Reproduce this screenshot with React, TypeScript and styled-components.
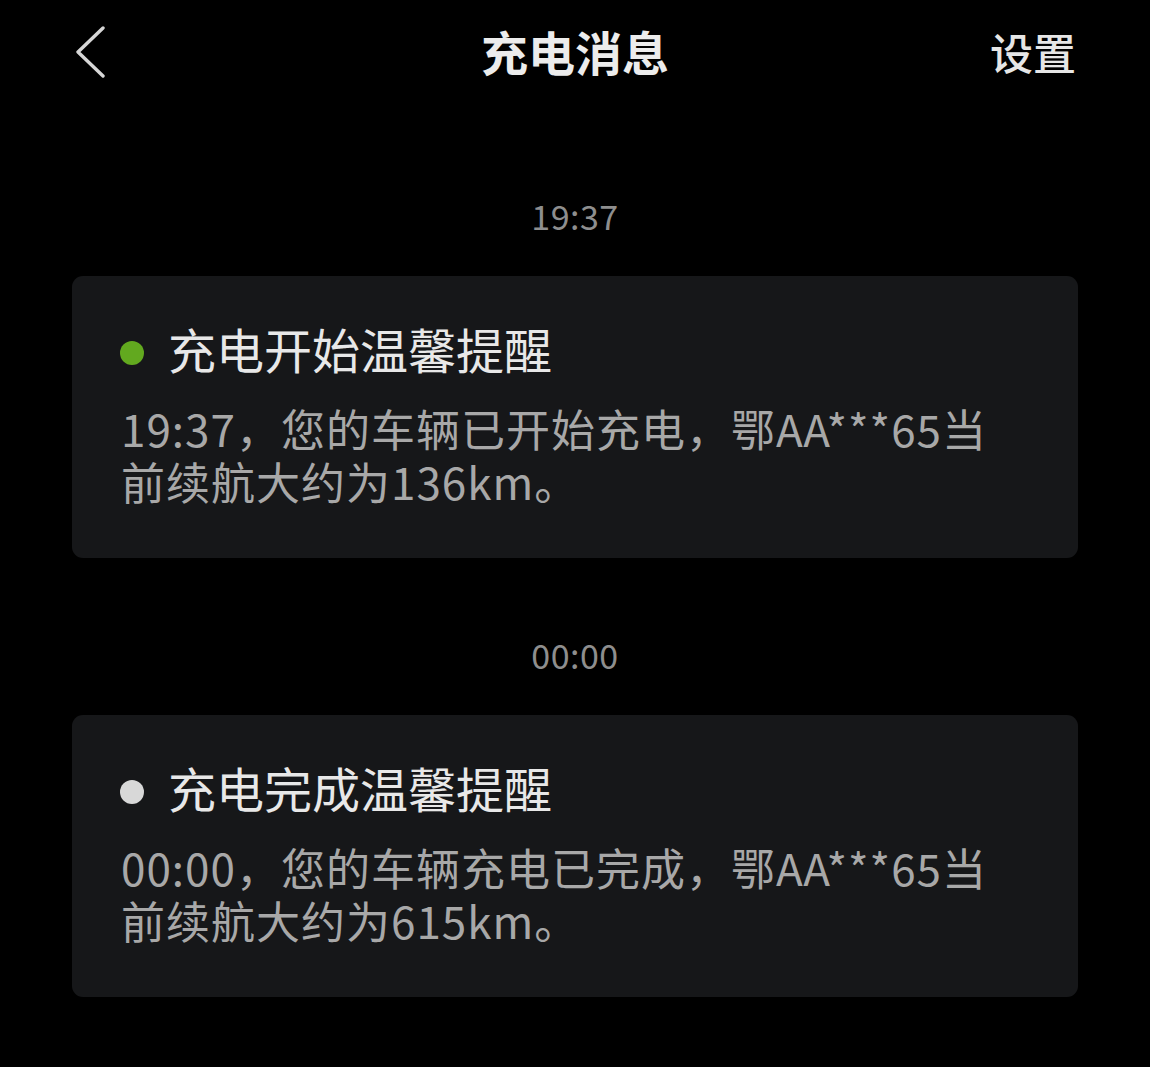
import React from 'react';
import styled, { createGlobalStyle } from 'styled-components';

const GlobalStyle = createGlobalStyle`
    html, body {
        margin: 0;
        padding: 0;
        background: #000;
    }
    body {
        font-family: "Noto Sans CJK SC", "Noto Sans", sans-serif;
        color: #e6e6e6;
    }
`;

const Page = styled.div`
    width: 1150px;
    min-height: 1067px;
    background: #000;
    box-sizing: border-box;
    padding: 0 72px;
`;

const Header = styled.div`
    height: 105px;
    display: grid;
    grid-template-columns: 1fr auto 1fr;
    align-items: center;
`;

const BackButton = styled.div`
    display: flex;
    align-items: center;
    padding-left: 2px;
    padding-bottom: 2px;
`;

const Title = styled.h1`
    margin: 0 0 5px;
    font-size: 47px;
    font-weight: 700;
    color: #ececec;
    line-height: 1;
`;

const Settings = styled.div`
    justify-self: end;
    font-size: 43px;
    font-weight: 500;
    color: #e6e6e6;
    padding-right: 2px;
    margin-bottom: 3px;
    line-height: 1;
`;

const List = styled.div`
    display: flex;
    flex-direction: column;
    padding-top: 91px;
    gap: 77px;
`;

const Item = styled.div`
    display: flex;
    flex-direction: column;
    gap: 40px;
`;

const Time = styled.div`
    text-align: center;
    font-size: 34px;
    line-height: 40px;
    color: #8e8e8e;
    letter-spacing: 0.5px;
`;

const Card = styled.div`
    background: #161719;
    border-radius: 11px;
    padding: 44px 56px 50px 49px;
    display: flex;
    flex-direction: column;
    gap: 26px;
`;

const CardTitle = styled.div`
    display: flex;
    align-items: center;
    gap: 24px;
    font-size: 48px;
    line-height: 56px;
    color: #e8e8e8;
`;

const Dot = styled.span<{ $read?: boolean }>`
    width: 24px;
    height: 24px;
    border-radius: 50%;
    margin-left: -1px;
    margin-top: 10px;
    background: ${p => (p.$read ? '#d8d8d8' : '#62a91f')};
    flex-shrink: 0;
`;

const Body = styled.div`
    font-size: 44px;
    line-height: 53px;
    letter-spacing: 1px;
    color: #a8a8a8;
`;

const messages = [
    {
        time: '19:37',
        title: '充电开始温馨提醒',
        body: '19:37，您的车辆已开始充电，鄂AA***65当前续航大约为136km。',
        read: false,
    },
    {
        time: '00:00',
        title: '充电完成温馨提醒',
        body: '00:00，您的车辆充电已完成，鄂AA***65当前续航大约为615km。',
        read: true,
    },
];

const App = () => {
    return (
        <Page>
            <GlobalStyle />
            <Header>
                <BackButton>
                    <svg width="32" height="52" viewBox="0 0 32 52" fill="none">
                        <path d="M29 2 L4 26 L29 50" stroke="#d6d6d6" strokeWidth="3.4" strokeLinecap="round" strokeLinejoin="round" />
                    </svg>
                </BackButton>
                <Title>充电消息</Title>
                <Settings>设置</Settings>
            </Header>
            <List>
                {messages.map(m => (
                    <Item key={m.time}>
                        <Time>{m.time}</Time>
                        <Card>
                            <CardTitle>
                                <Dot $read={m.read} />
                                {m.title}
                            </CardTitle>
                            <Body>{m.body}</Body>
                        </Card>
                    </Item>
                ))}
            </List>
        </Page>
    );
};

export default App;
